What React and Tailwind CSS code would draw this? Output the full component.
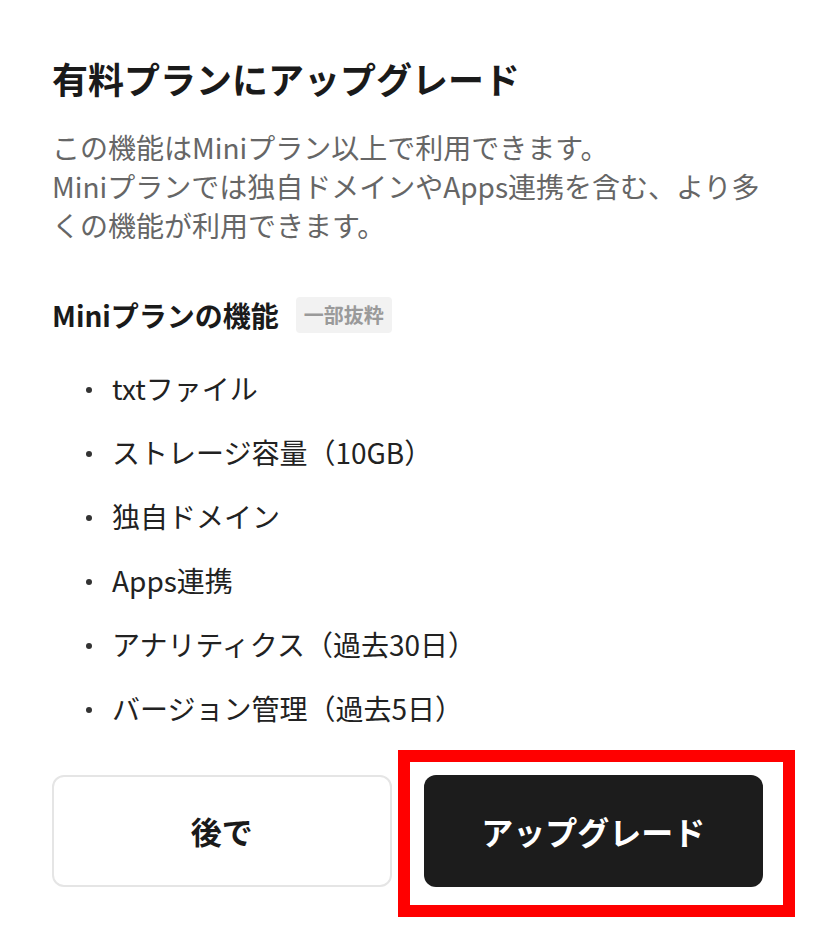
import React from 'react';

const features = [
    'txtファイル',
    'ストレージ容量（10GB）',
    '独自ドメイン',
    'Apps連携',
    'アナリティクス（過去30日）',
    'バージョン管理（過去5日）',
];

export default function App() {
    return (
        <div className="min-h-screen bg-white px-[52px] pt-[51px] font-['Noto_Sans_CJK_JP','Noto_Sans',sans-serif]">
            {/* Heading */}
            <h1 className="text-[36px] leading-[54px] font-bold text-[#1a1a1a]">有料プランにアップグレード</h1>

            {/* Description */}
            <p className="mt-[23px] w-[720px] text-[28px] leading-[39px] text-[#666666]">
                この機能はMiniプラン以上で利用できます。<br />
                Miniプランでは独自ドメインやApps連携を含む、より多<br />
                くの機能が利用できます。
            </p>

            {/* Features */}
            <div className="mt-[52px] flex items-center gap-[17px] h-[36px]">
                <span className="text-[28px] font-bold text-[#1a1a1a]">Miniプランの機能</span>
                <span className="h-[36px] px-[8px] rounded-[4px] bg-[#f2f2f2] text-[20px] leading-[36px] font-bold text-[#9a9a9a]">一部抜粋</span>
            </div>

            <ul className="mt-[23px]">
                {features.map(f => (
                    <li key={f} className="flex items-center h-[64px]">
                        <span className="w-[6px] h-[6px] ml-[34px] mt-[4px] rounded-full bg-[#333]"></span>
                        <span className="ml-[20px] text-[28px] text-[#222]">{f}</span>
                    </li>
                ))}
            </ul>

            {/* Actions */}
            <div className="mt-[35px] grid grid-cols-2 gap-[32px] w-[711px]">
                <button className="h-[112px] rounded-[12px] border-2 border-[#e5e5e5] bg-white text-[31px] font-bold text-[#1a1a1a]">後で</button>
                <div className="relative">
                    <button className="w-full h-[112px] rounded-[12px] bg-[#1c1c1c] text-[32px] font-bold text-white">アップグレード</button>
                    {/* annotation frame */}
                    <div className="absolute -left-[26px] -right-[32px] -top-[25px] -bottom-[30px] border-[12px] border-[#ff0000] pointer-events-none"></div>
                </div>
            </div>
        </div>
    );
}
